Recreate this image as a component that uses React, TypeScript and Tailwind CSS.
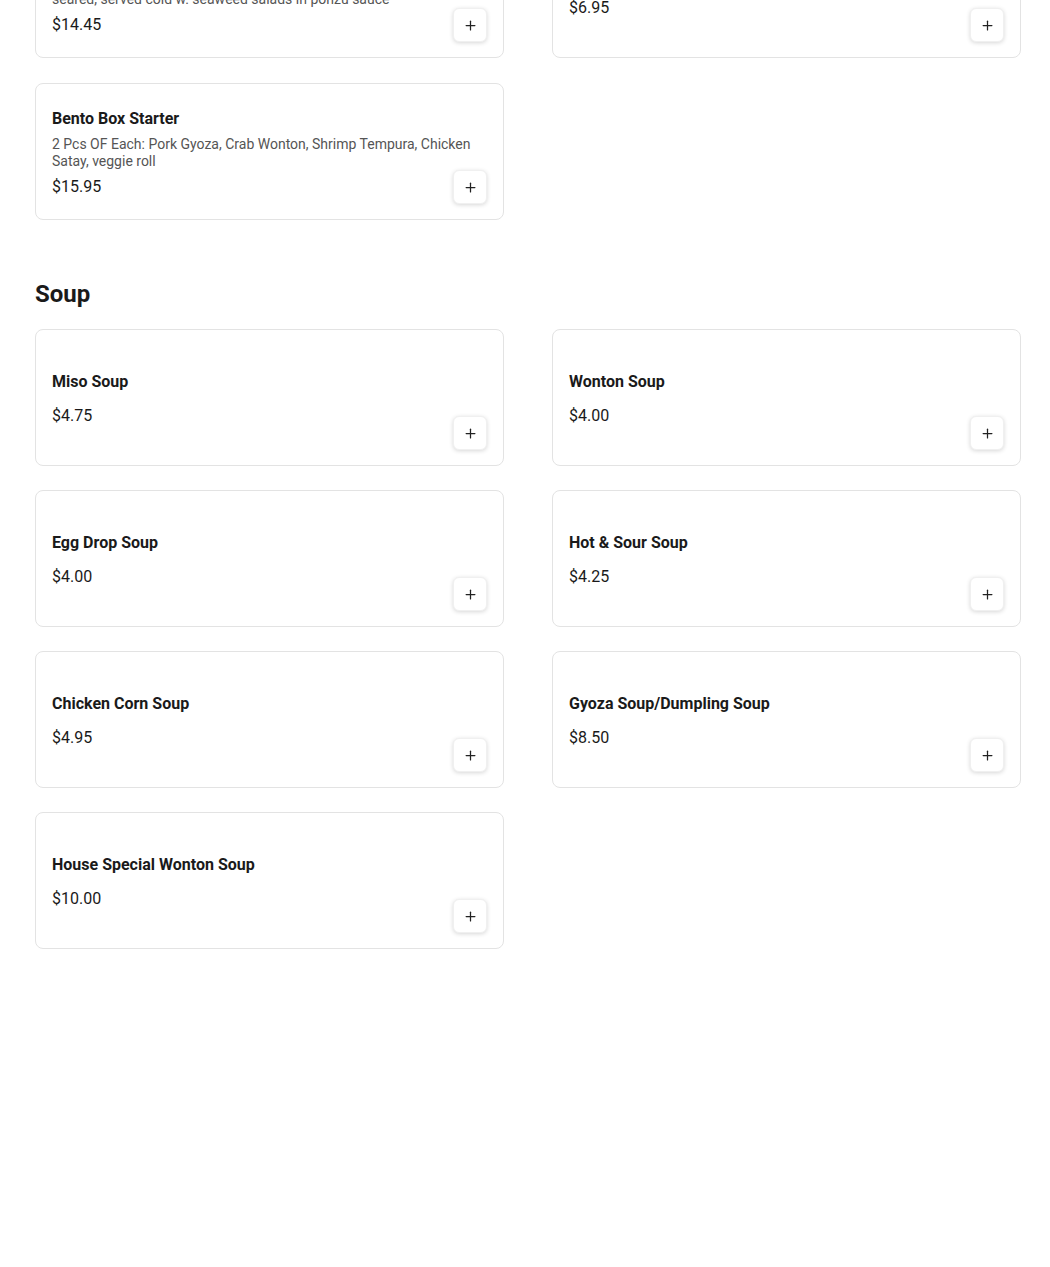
import { Plus } from 'lucide-react';

type Item = { name: string; desc?: React.ReactNode; price: string };

const topItems: Item[] = [
    {
        name: 'Pepper Tuna Tataki',
        desc: (
            <>
                Fresh tuna coated with black pepper &amp; lightly
                <br />
                seared, served cold w. seaweed salads in ponzu sauce
            </>
        ),
        price: '$14.45',
    },
    { name: 'Seaweed Salad', price: '$6.95' },
    {
        name: 'Bento Box Starter',
        desc: '2 Pcs OF Each: Pork Gyoza, Crab Wonton, Shrimp Tempura, Chicken Satay, veggie roll',
        price: '$15.95',
    },
];

const soups: Item[] = [
    { name: 'Miso Soup', price: '$4.75' },
    { name: 'Wonton Soup', price: '$4.00' },
    { name: 'Egg Drop Soup', price: '$4.00' },
    { name: 'Hot & Sour Soup', price: '$4.25' },
    { name: 'Chicken Corn Soup', price: '$4.95' },
    { name: 'Gyoza Soup/Dumpling Soup', price: '$8.50' },
    { name: 'House Special Wonton Soup', price: '$10.00' },
];

function MenuCard({ item }: { item: Item }) {
    return (
        <div className="relative flex min-h-[137px] items-center rounded-lg border border-[#e3e3e3] bg-white px-4 pt-[2px]">
            <div className="flex w-full flex-col gap-[7px]">
                <h3 className="text-[16px] leading-5 font-bold text-[#1a1a1a]">{item.name}</h3>
                <p className="text-[14px] leading-[17px] text-[#555]">{item.desc}</p>
                <div className="text-[16px] leading-5 text-[#1a1a1a]">{item.price}</div>
            </div>
            <button className="absolute right-4 bottom-[15px] flex h-[34px] w-[34px] items-center justify-center rounded-md border border-[#f0f0f0] bg-white shadow-[0_1px_4px_rgba(0,0,0,0.16)]">
                <Plus size={15} strokeWidth={2} className="text-[#222]" />
            </button>
        </div>
    );
}

export default function App() {
    return (
        <div
            className="min-h-[1267px] overflow-hidden bg-white pr-[29px] pl-[35px]"
            style={{ fontFamily: 'Roboto, "Liberation Sans", sans-serif' }}
        >
            {/* tail of previous section (page is scrolled) */}
            <div className="-mt-[79px] grid grid-cols-2 gap-x-12 gap-y-[25px]">
                {topItems.map((item) => (
                    <MenuCard key={item.name} item={item} />
                ))}
            </div>

            {/* Soup */}
            <h2 className="mt-[58px] mb-[19px] text-[24px] leading-8 font-bold text-[#1a1a1a]">Soup</h2>
            <div className="grid grid-cols-2 gap-x-12 gap-y-6">
                {soups.map((item) => (
                    <MenuCard key={item.name} item={item} />
                ))}
            </div>
        </div>
    );
}
